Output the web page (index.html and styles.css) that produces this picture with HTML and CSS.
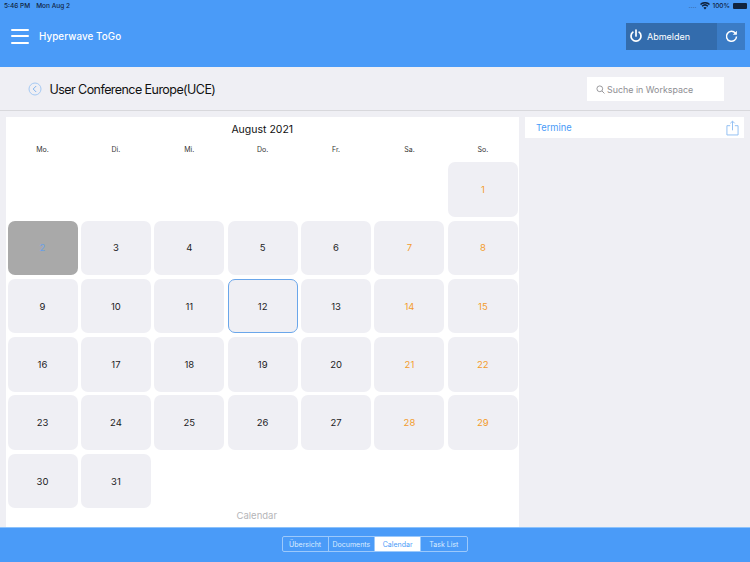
FILE: index.html
```html
<!DOCTYPE html>
<html lang="de">
<head>
<meta charset="utf-8">
<title>Hyperwave ToGo</title>
<link rel="stylesheet" href="styles.css">
</head>
<body>
<div class="app">
  <header class="topbar">
    <div class="status">
      <div class="status-left"><span>5:46 PM</span><span>Mon Aug 2</span></div>
      <div class="status-right">
        <span class="dots">....</span>
        <svg class="wifi" width="10" height="8" viewBox="0 0 10 8"><path d="M5 7.6 L3.4 5.7 A2.4 2.4 0 0 1 6.6 5.7Z M2.6 4.8 L1.6 3.7 A5 5 0 0 1 8.4 3.7 L7.4 4.8 A3.6 3.6 0 0 0 2.6 4.8Z M1 3 L0 1.9 A7.4 7.4 0 0 1 10 1.9 L9 3 A6 6 0 0 0 1 3Z" fill="#10233f"/></svg>
        <span>100%</span>
        <span class="battery"></span>
      </div>
    </div>
    <div class="bar">
      <div class="brand">
        <div class="burger"><i></i><i></i><i></i></div>
        <span class="brand-name">Hyperwave ToGo</span>
      </div>
      <div class="actions">
        <div class="logout">
          <svg width="14" height="14" viewBox="0 0 14 14" fill="none" stroke="#fff" stroke-width="1.7" stroke-linecap="round"><path d="M7 1v6"/><path d="M3.9 3.2a5 5 0 1 0 6.2 0"/></svg>
          <span>Abmelden</span>
        </div>
        <div class="refresh">
          <svg width="13" height="13" viewBox="0 0 14 14" fill="none" stroke="#fff" stroke-width="1.6"><path d="M11.2 3.400A5.400 5.400 0 1 0 12.400 7"/><path d="M12.800 .8v4.400H8.400" stroke="none" fill="#fff"/></svg>
        </div>
      </div>
    </div>
  </header>

  <section class="subbar">
    <div class="title-group">
      <svg class="back" width="14" height="14" viewBox="0 0 14 14" fill="none" stroke="#a5c9f3" stroke-width="1"><circle cx="7" cy="7" r="6"/><path d="M8.2 4 5.2 7l3 3" stroke="#7fb3ee"/></svg>
      <h1>User Conference Europe(UCE)</h1>
    </div>
    <div class="search">
      <svg width="9" height="9" viewBox="0 0 10 10" fill="none" stroke="#8e8e93" stroke-width="1"><circle cx="4.2" cy="4.2" r="3.2"/><path d="M6.6 6.6 9.4 9.4"/></svg>
      <span>Suche in Workspace</span>
    </div>
  </section>

  <main class="content">
    <section class="calendar">
      <h2>August 2021</h2>
      <div class="weekdays">
        <span>Mo.</span><span>Di.</span><span>Mi.</span><span>Do.</span><span>Fr.</span><span>Sa.</span><span>So.</span>
      </div>
      <div class="days">
        <div class="blank"></div><div class="blank"></div><div class="blank"></div><div class="blank"></div><div class="blank"></div><div class="blank"></div>
        <div class="day we">1</div>
        <div class="day past">2</div><div class="day">3</div><div class="day">4</div><div class="day">5</div><div class="day">6</div><div class="day we">7</div><div class="day we">8</div>
        <div class="day">9</div><div class="day">10</div><div class="day">11</div><div class="day today">12</div><div class="day">13</div><div class="day we">14</div><div class="day we">15</div>
        <div class="day">16</div><div class="day">17</div><div class="day">18</div><div class="day">19</div><div class="day">20</div><div class="day we">21</div><div class="day we">22</div>
        <div class="day">23</div><div class="day">24</div><div class="day">25</div><div class="day">26</div><div class="day">27</div><div class="day we">28</div><div class="day we">29</div>
        <div class="day">30</div><div class="day">31</div>
      </div>
      <div class="cal-label">Calendar</div>
    </section>
    <aside class="side">
      <div class="side-head">
        <span>Termine</span>
        <svg width="13" height="16" viewBox="0 0 14 16" fill="none" stroke="#8cbcf2" stroke-width="1"><path d="M4.5 5.5H1v10h12v-10H9.500"/><path d="M7 10.500V.8M4.600 3 7 .6 9.400 3"/></svg>
      </div>
    </aside>
  </main>

  <footer class="tabs">
    <div class="segmented">
      <span class="seg">Übersicht</span>
      <span class="seg">Documents</span>
      <span class="seg active">Calendar</span>
      <span class="seg">Task List</span>
    </div>
  </footer>
</div>
</body>
</html>
```
FILE: styles.css
```css
* { box-sizing: border-box; margin: 0; padding: 0; }
html, body { width: 750px; height: 562px; overflow: hidden; }
body { font-family: "Inter", "Liberation Sans", sans-serif; background: #efeff4; color: #1c1c1e; }
.app { width: 750px; height: 562px; display: flex; flex-direction: column; }

.topbar { height: 67px; background: #4a9bf8; display: flex; flex-direction: column; }
.status { height: 12px; padding: 0 3px 0 4px; display: flex; justify-content: space-between; align-items: center; font-size: 6.500px; font-weight: 500; color: #10233f; }
.status-left { display: flex; gap: 6px; }
.status-right { display: flex; align-items: center; gap: 2px; }
.dots { color: #3a6ba8; margin-right: 2px; }
.battery { width: 14px; height: 6px; background: #10233f; border-radius: 1px; margin-left: 1px; }
.bar { flex: 1; display: flex; justify-content: space-between; align-items: flex-start; padding: 11px 5px 0 10.500px; }
.brand { display: flex; align-items: center; gap: 10.500px; height: 26px; }
.burger { width: 18px; display: flex; flex-direction: column; gap: 4.500px; }
.burger i { display: block; height: 2px; background: #fff; border-radius: 1px; }
.brand-name { font-size: 9.800px; font-weight: 500; color: #fff; letter-spacing: .1px; }
.actions { display: flex; height: 27px; color: #fff; }
.logout { width: 91px; background: #336cad; display: flex; align-items: center; gap: 4px; padding-left: 3px; font-size: 9px; padding-bottom: 1px; }
.refresh { width: 28px; background: #3b7cc6; display: flex; align-items: center; justify-content: center; padding-bottom: 1px; }

.subbar { height: 44px; padding: 1px 26px 0 28px; border-bottom: 1px solid #d8d8dc; display: flex; align-items: center; justify-content: space-between; }
.title-group { display: flex; align-items: center; gap: 7.500px; }
h1 { font-size: 12.500px; font-weight: 400; color: #111; letter-spacing: -.56px; }
.search { width: 137px; height: 24px; background: #fff; display: flex; align-items: center; gap: 2px; padding-left: 9px; font-size: 8.900px; color: #8e8e93; }

.content { flex: 1; display: flex; gap: 6px; padding: 6px 6px 0; min-height: 0; }
.calendar { width: 513px; background: #fff; padding: 0 2px 0 1.500px; display: flex; flex-direction: column; }
h2 { font-size: 10.500px; font-weight: 400; text-align: center; color: #111; height: 23px; line-height: 25px; }
.weekdays { display: grid; grid-template-columns: repeat(7, 70px); column-gap: 3.400px; height: 22.300px; font-size: 7px; text-align: center; color: #333; line-height: 20px; }
.days { display: grid; grid-template-columns: repeat(7, 70px); grid-auto-rows: 54.500px; gap: 3.800px 3.400px; }
.day { background: #efeff4; border-radius: 7px; display: flex; align-items: center; justify-content: center; font-size: 9.500px; color: #1c1c1e; }
.we { color: #f39c2c; }
.past { background: #a9a9a9; color: #6aa0e6; }
.today { border: 1.500px solid #6aa6ea; }
.cal-label { text-align: center; font-size: 9.500px; color: #b5b5b8; margin-top: 2px; margin-right: 11px; }

.side { width: 219px; }
.side-head { height: 21px; background: #fff; display: flex; align-items: center; justify-content: space-between; padding: 0 5px 0 11px; font-size: 9.300px; color: #4a9bf8; }

.tabs { height: 35px; background: #4a9bf8; border-top: 1px solid #8cc2fb; padding-bottom: 2px; display: flex; align-items: center; justify-content: center; }
.segmented { display: flex; width: 186px; height: 16px; margin-right: 1px; border: 1px solid #9cc9fb; border-radius: 2px; overflow: hidden; }
.seg { flex: 1; display: flex; align-items: center; justify-content: center; font-size: 7px; color: #dcecff; border-right: 1px solid #9cc9fb; }
.seg:last-child { border-right: 0; }
.active { background: #fff; color: #4a9bf8; }
```
